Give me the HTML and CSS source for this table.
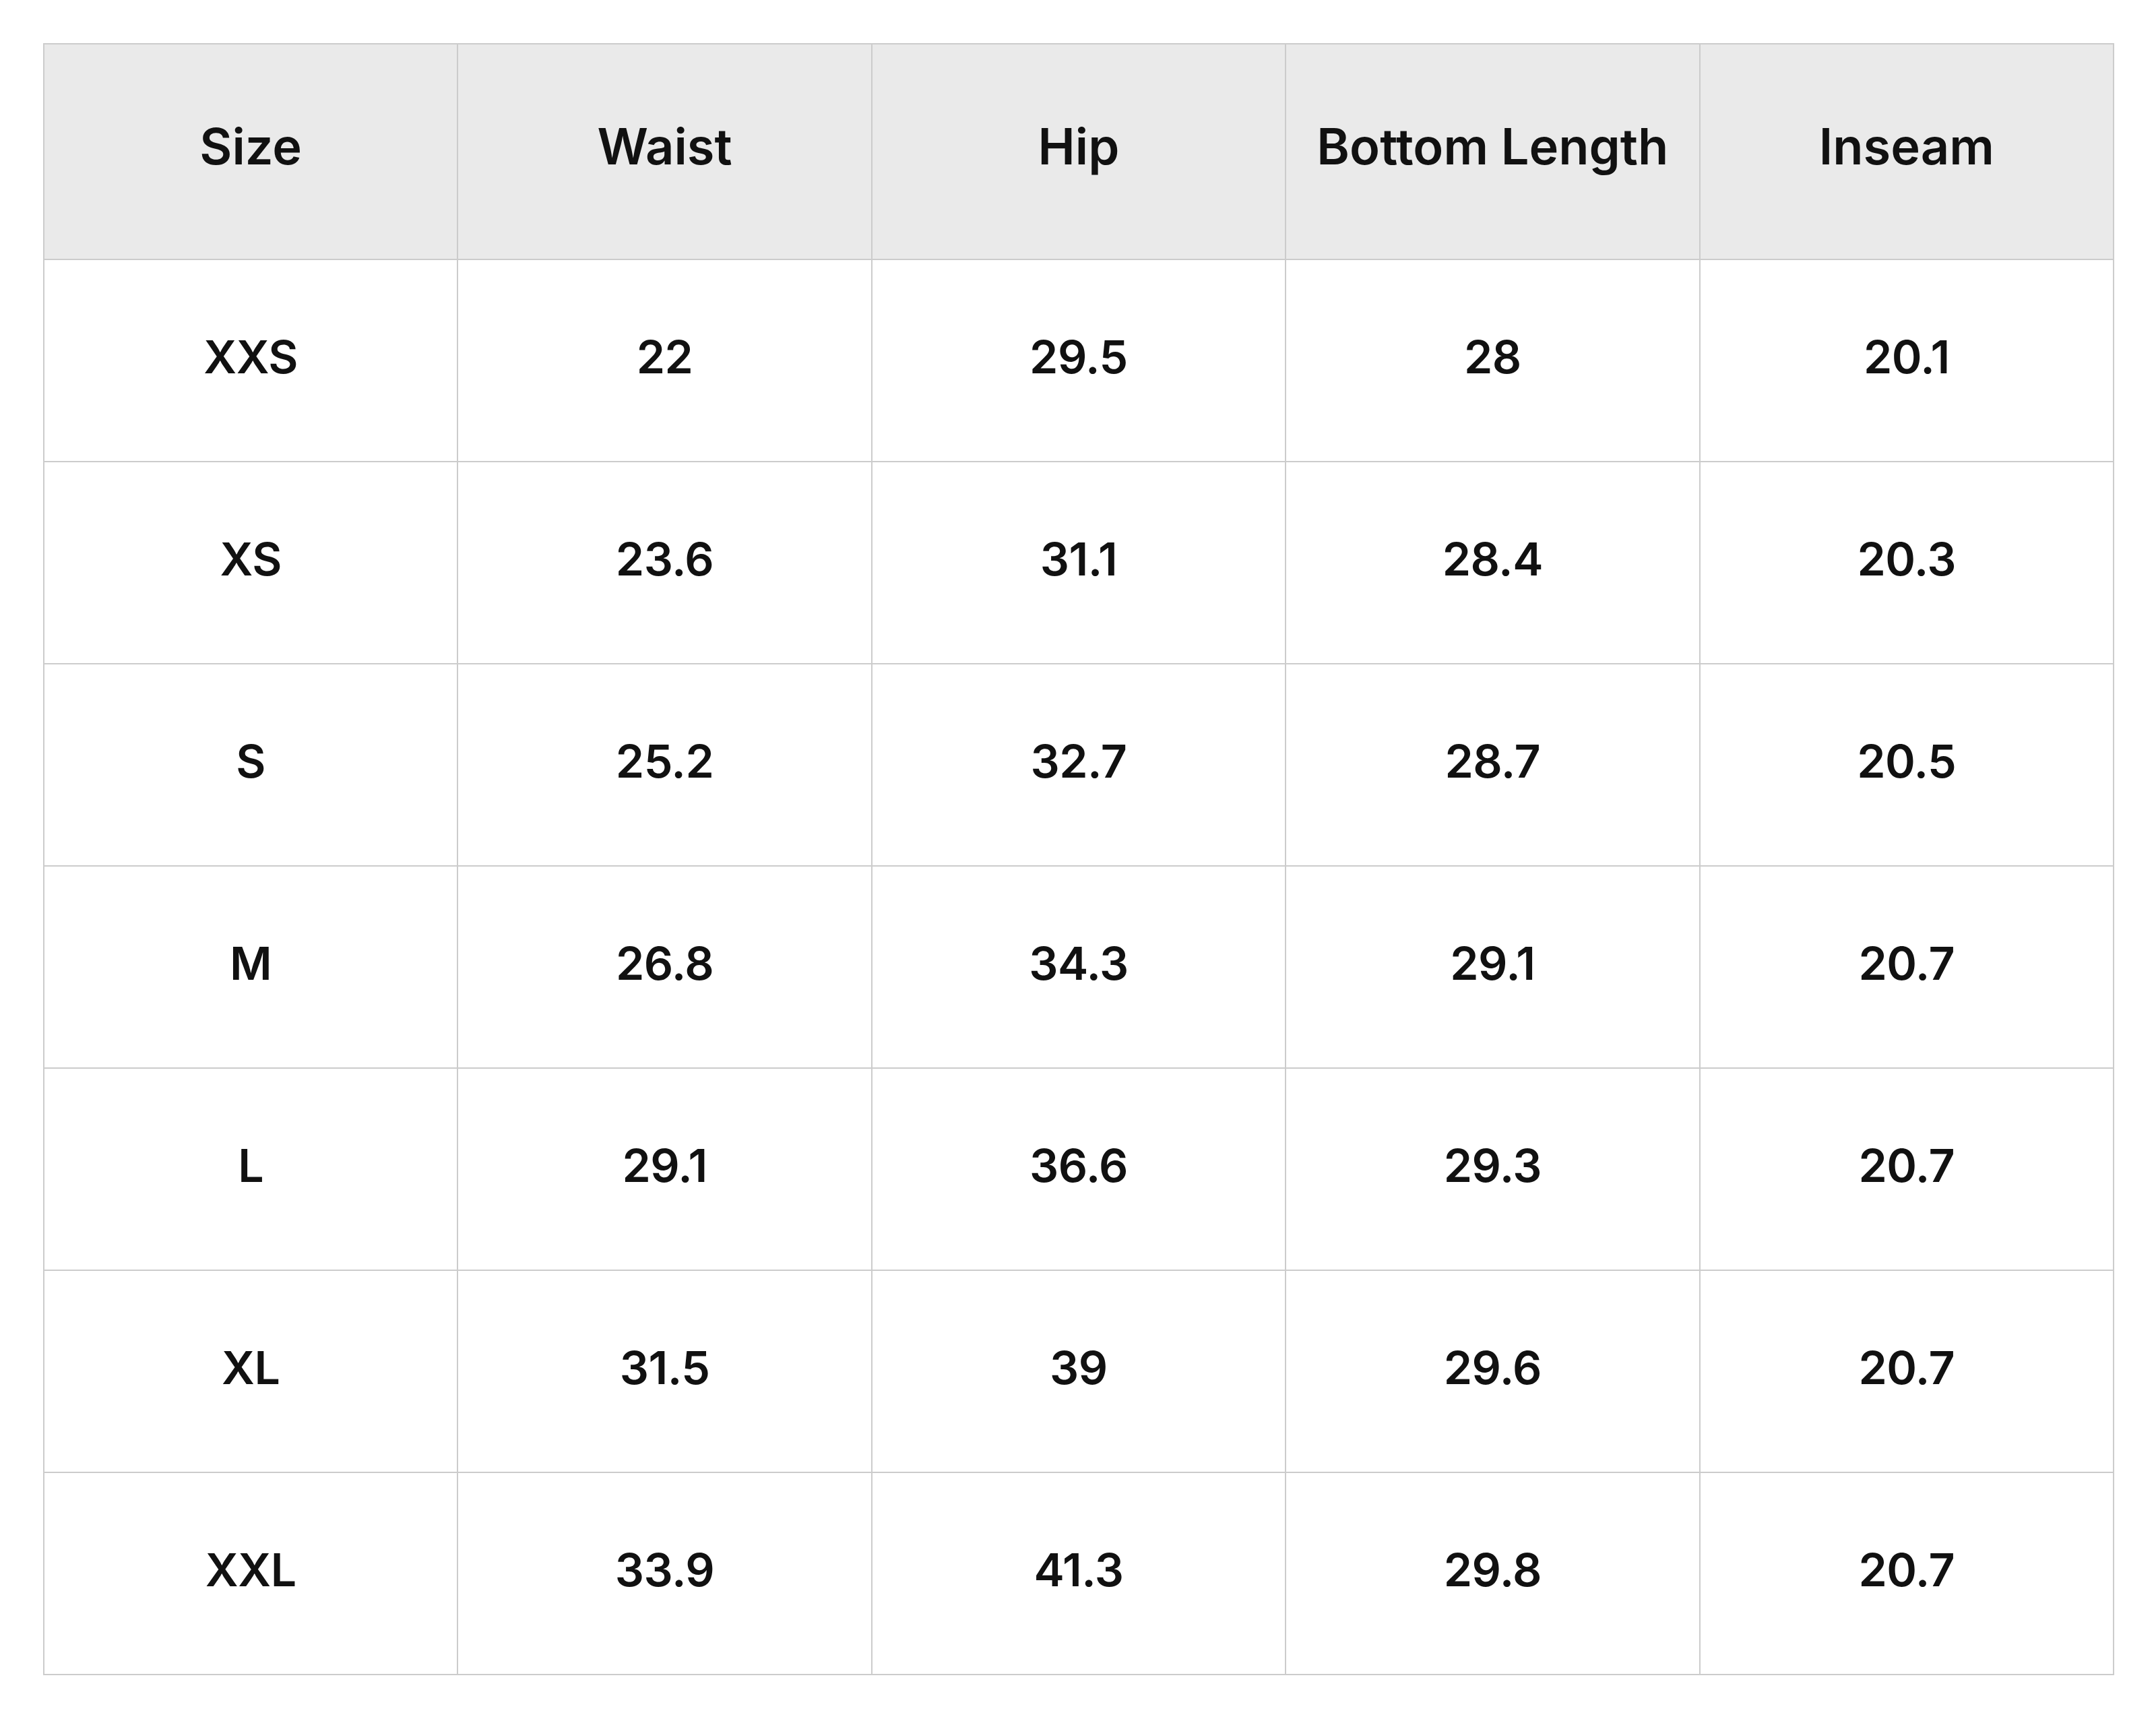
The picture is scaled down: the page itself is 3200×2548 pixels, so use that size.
FILE: index.html
```html
<!DOCTYPE html>
<html lang="en">
<head>
<meta charset="utf-8">
<title>Size Chart</title>
<link rel="stylesheet" href="styles.css">
</head>
<body>
<table class="size-table">
  <thead>
    <tr class="head-row">
      <th>Size</th>
      <th>Waist</th>
      <th>Hip</th>
      <th>Bottom Length</th>
      <th>Inseam</th>
    </tr>
  </thead>
  <tbody>
    <tr><td>XXS</td><td>22</td><td>29.5</td><td>28</td><td>20.1</td></tr>
    <tr><td>XS</td><td>23.6</td><td>31.1</td><td>28.4</td><td>20.3</td></tr>
    <tr><td>S</td><td>25.2</td><td>32.7</td><td>28.7</td><td>20.5</td></tr>
    <tr><td>M</td><td>26.8</td><td>34.3</td><td>29.1</td><td>20.7</td></tr>
    <tr><td>L</td><td>29.1</td><td>36.6</td><td>29.3</td><td>20.7</td></tr>
    <tr><td>XL</td><td>31.5</td><td>39</td><td>29.6</td><td>20.7</td></tr>
    <tr><td>XXL</td><td>33.9</td><td>41.3</td><td>29.8</td><td>20.7</td></tr>
  </tbody>
</table>
</body>
</html>
```

FILE: styles.css
```css
html, body {
  margin: 0;
  padding: 0;
  background: #ffffff;
}

body {
  padding: 64px;
  font-family: Inter, "Liberation Sans", Arial, sans-serif;
  color: #111111;
}

.size-table {
  width: 3074px;
  border-collapse: collapse;
  table-layout: fixed;
}

.size-table th,
.size-table td {
  border: 2px solid #cccccc;
  text-align: center;
  vertical-align: middle;
  padding: 0;
  font-weight: 600;
  color: #111111;
}

.size-table th {
  background: #eaeaea;
  font-size: 74px;
  letter-spacing: 0;
  padding-bottom: 16px;
}

.size-table td {
  font-size: 68px;
  letter-spacing: -0.5px;
  padding-bottom: 12px;
}

.head-row {
  height: 320px;
}

.size-table tbody tr {
  height: 300px;
}
```
